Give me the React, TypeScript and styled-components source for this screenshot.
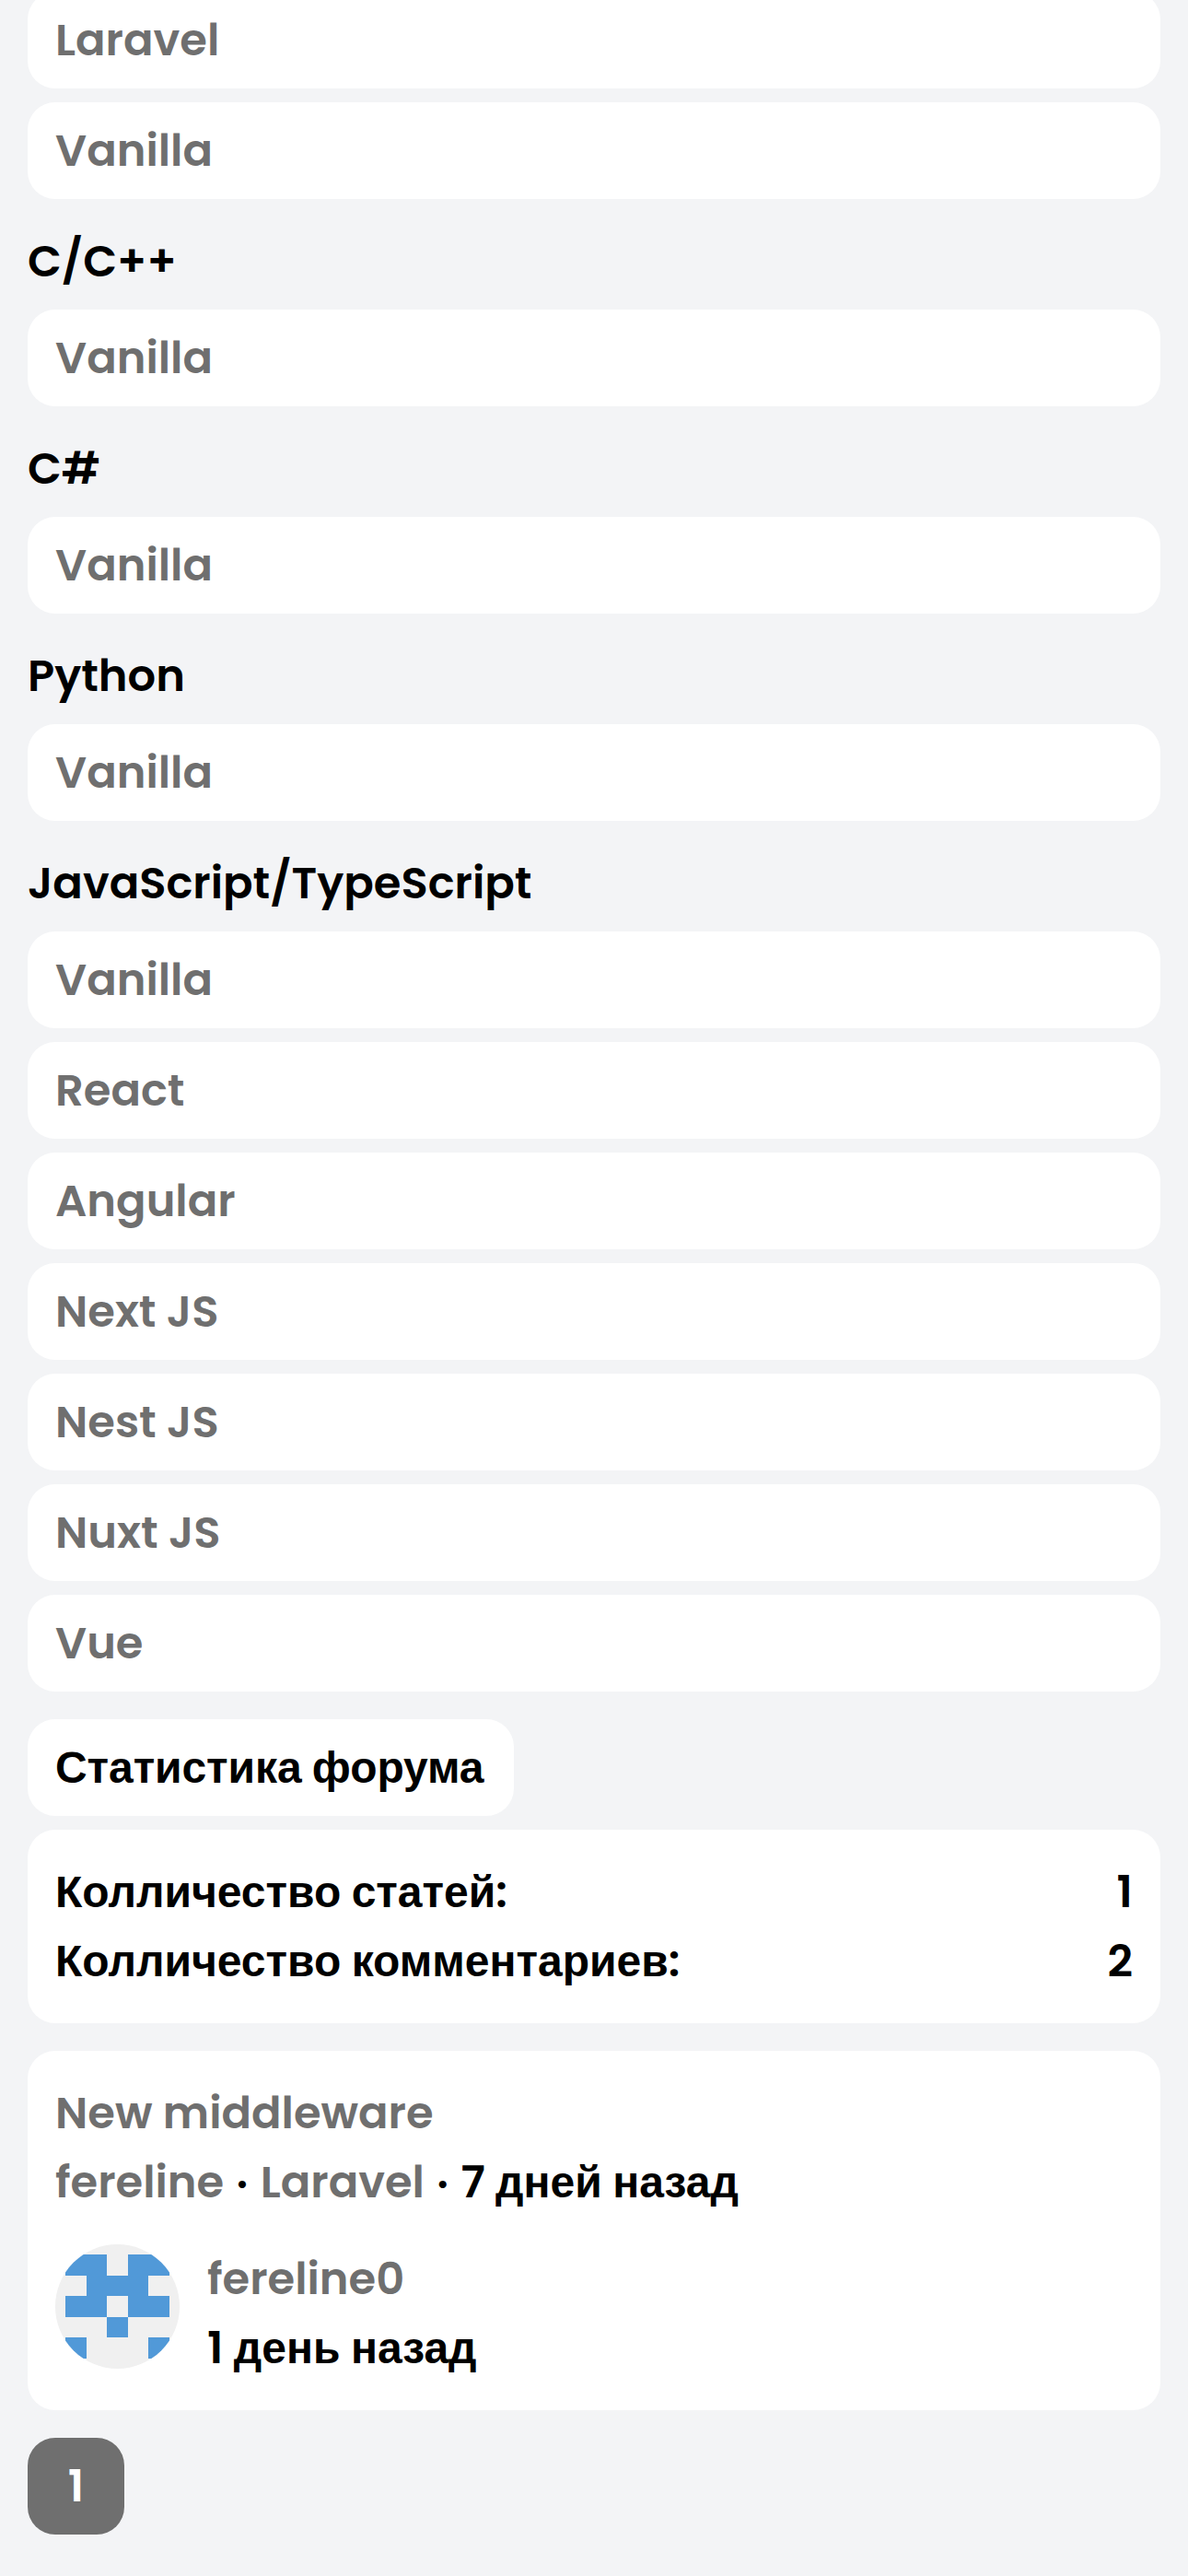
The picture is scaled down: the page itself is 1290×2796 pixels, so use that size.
import React from "react";
import styled, { createGlobalStyle } from "styled-components";

const GlobalStyle = createGlobalStyle`
  *, *::before, *::after { box-sizing: border-box; }
  body {
    margin: 0;
    background: #f3f4f6;
    color: #000;
    font: 600 48px/75px Poppins, "Liberation Sans", Arial, sans-serif;
  }
`;

const Page = styled.main`
  height: 2796px;
  padding: 0 30px;
  overflow: hidden;
`;

const Sidebar = styled.nav`
  display: flex;
  flex-direction: column;
  gap: 30px;
  margin-top: -9px;
`;

const Group = styled.section`
  display: flex;
  flex-direction: column;
  gap: 15px;
`;

const Heading = styled.h2`
  margin: 0;
  font: inherit;
`;

const TopicLink = styled.a`
  padding: 15px 30px;
  border-radius: 30px;
  background: #fff;
  color: #6f6f6f;
  text-decoration: none;
`;

const Stats = styled.section`
  display: flex;
  flex-direction: column;
  align-items: flex-start;
  gap: 15px;
  margin-top: 30px;
`;

const StatsTitle = styled.div`
  min-width: 528px;
  padding: 15px 30px;
  border-radius: 30px;
  background: #fff;
  letter-spacing: -0.08px;
`;

const Card = styled.div`
  width: 100%;
  padding: 30px;
  border-radius: 30px;
  background: #fff;
`;

const StatRow = styled.div`
  display: flex;
  justify-content: space-between;
`;

const Post = styled(Card)`
  display: flex;
  flex-direction: column;
  gap: 30px;
  margin-top: 30px;
`;

const PostMeta = styled.div`
  height: 75px;
  white-space: nowrap;
`;

const TextLink = styled.a`
  color: #6f6f6f;
  text-decoration: none;
`;

const Bullet = styled.span`
  display: inline-block;
  width: 16.6px;
  font-size: 29px;
  line-height: 1;
  text-align: center;
  vertical-align: 4px;
`;

const LastReply = styled.div`
  display: flex;
  gap: 30px;
`;

const Avatar = styled.svg`
  width: 135px;
  height: 135px;
  border-radius: 50%;
  background: #f0f0f0;
`;

const PageButton = styled.button`
  display: flex;
  align-items: center;
  justify-content: center;
  width: 105px;
  height: 105px;
  margin-top: 30px;
  padding: 0;
  border: 0;
  border-radius: 30px;
  background: #6f6f6f;
  color: #fff;
  font: inherit;
`;

const groups: { title?: string; topics: string[] }[] = [
  { topics: ["Laravel", "Vanilla"] },
  { title: "C/C++", topics: ["Vanilla"] },
  { title: "C#", topics: ["Vanilla"] },
  { title: "Python", topics: ["Vanilla"] },
  {
    title: "JavaScript/TypeScript",
    topics: ["Vanilla", "React", "Angular", "Next JS", "Nest JS", "Nuxt JS", "Vue"],
  },
];

export default function App() {
  return (
    <>
      <GlobalStyle />
      <Page>
        <Sidebar>
          {groups.map((group, i) => (
            <Group key={i}>
              {group.title && <Heading>{group.title}</Heading>}
              {group.topics.map((topic) => (
                <TopicLink key={topic}>{topic}</TopicLink>
              ))}
            </Group>
          ))}
        </Sidebar>
        <Stats>
          <StatsTitle>Статистика форума</StatsTitle>
          <Card>
            <StatRow>
              <span>Колличество статей:</span>
              <span>1</span>
            </StatRow>
            <StatRow>
              <span>Колличество комментариев:</span>
              <span>2</span>
            </StatRow>
          </Card>
        </Stats>
        <Post>
          <div>
            <TextLink>New middleware</TextLink>
            <PostMeta>
              <TextLink>fereline</TextLink> <Bullet>•</Bullet> <TextLink>Laravel</TextLink>{" "}
              <Bullet>•</Bullet> 7 дней назад
            </PostMeta>
          </div>
          <LastReply>
            <Avatar viewBox="0 0 12 12" shapeRendering="crispEdges">
              <path
                fill="#5199d8"
                d="M1 1h4v2h2V1h4v2H9v2h2v2H7V5H5v2H1V5h2V3H1zM5 7h2v2H5zM1 9h2v2H1zM9 9h2v2H9z"
              />
            </Avatar>
            <div>
              <TextLink>fereline0</TextLink>
              <div>1 день назад</div>
            </div>
          </LastReply>
        </Post>
        <PageButton>1</PageButton>
      </Page>
    </>
  );
}
